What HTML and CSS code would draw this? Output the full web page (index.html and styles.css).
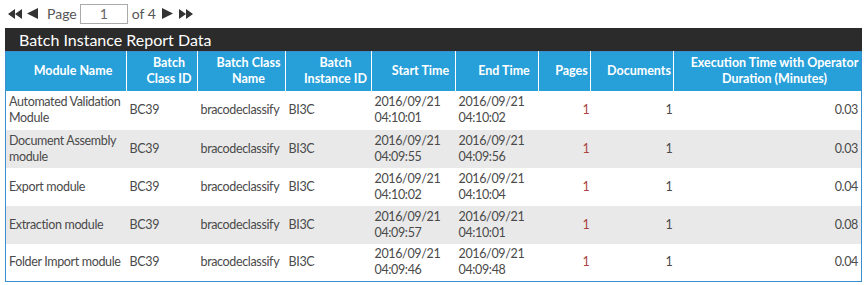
FILE: index.html
```html
<!DOCTYPE html>
<html>
<head>
<meta charset="utf-8">
<link rel="stylesheet" href="styles.css">
</head>
<body>
<div class="wrap">
  <div class="pager">
    <svg class="ico first" width="15" height="10" viewBox="0 0 15 10"><polygon points="0,5 7,0 7,10" /><polygon points="7,5 14,0 14,10" /></svg>
    <svg class="ico prev" width="11" height="11" viewBox="0 0 11 11"><polygon points="0,5.5 11,0 11,11" /></svg>
    <span class="lbl">Page</span>
    <input class="pg" type="text" value="1">
    <span class="lbl">of 4</span>
    <svg class="ico next" width="11" height="11" viewBox="0 0 11 11"><polygon points="11,5.5 0,0 0,11" /></svg>
    <svg class="ico last" width="15" height="10" viewBox="0 0 15 10"><polygon points="15,5 8,0 8,10" /><polygon points="8,5 1,0 1,10" /></svg>
  </div>
  <div class="title">Batch Instance Report Data</div>
  <table class="grid">
    <colgroup>
      <col style="width:121px"><col style="width:71px"><col style="width:88px"><col style="width:86px"><col style="width:84px"><col style="width:83px"><col style="width:52px"><col style="width:83px"><col>
    </colgroup>
    <thead>
      <tr>
        <th>Module Name</th><th>Batch Class ID</th><th>Batch Class Name</th><th>Batch Instance ID</th><th>Start Time</th><th>End Time</th><th>Pages</th><th>Documents</th><th>Execution Time with Operator Duration (Minutes)</th>
      </tr>
    </thead>
    <tbody>
      <tr class="first-row"><td>Automated Validation Module</td><td>BC39</td><td>bracodeclassify</td><td>BI3C</td><td>2016/09/21 04:10:01</td><td>2016/09/21 04:10:02</td><td class="num one red">1</td><td class="num one">1</td><td class="num">0.03</td></tr>
      <tr class="alt"><td>Document Assembly module</td><td>BC39</td><td>bracodeclassify</td><td>BI3C</td><td>2016/09/21 04:09:55</td><td>2016/09/21 04:09:56</td><td class="num one red">1</td><td class="num one">1</td><td class="num">0.03</td></tr>
      <tr><td>Export module</td><td>BC39</td><td>bracodeclassify</td><td>BI3C</td><td>2016/09/21 04:10:02</td><td>2016/09/21 04:10:04</td><td class="num one red">1</td><td class="num one">1</td><td class="num">0.04</td></tr>
      <tr class="alt"><td>Extraction module</td><td>BC39</td><td>bracodeclassify</td><td>BI3C</td><td>2016/09/21 04:09:57</td><td>2016/09/21 04:10:01</td><td class="num one red">1</td><td class="num one">1</td><td class="num">0.08</td></tr>
      <tr><td>Folder Import module</td><td>BC39</td><td>bracodeclassify</td><td>BI3C</td><td>2016/09/21 04:09:46</td><td>2016/09/21 04:09:48</td><td class="num one red">1</td><td class="num one">1</td><td class="num">0.04</td></tr>
    </tbody>
  </table>
</div>
</body>
</html>
```

FILE: styles.css
```css
html, body { margin: 0; padding: 0; background: #fff; }
body { font-family: Lato, "Open Sans", sans-serif; color: #555; }
.wrap { padding-left: 5px; width: 857px; }
.pager { height: 27px; display: flex; align-items: center; padding-left: 3px; box-sizing: border-box; }
.ico { fill: #333; flex: none; }
.first { margin-right: 4px; }
.prev { margin-right: 9px; }
.lbl { font-size: 14px; color: #555; }
.pg { width: 48px; height: 20px; box-sizing: border-box; border: 1px solid #aaa; margin: 0 4px 0 3px; font: 14px Lato, sans-serif; color: #666; text-align: center; padding: 0; }
.next { margin-left: 6px; margin-right: 5px; }
.title { height: 23px; background: #2b2b2b; color: #fff; font-size: 16px; line-height: 23px; padding-left: 14px; margin-top: 1px; }
.grid { border-collapse: collapse; table-layout: fixed; width: 857px; border: 1px solid #3a8fcf; font-size: 12px; }
.grid th { background: #27a0da; color: #fff; font-weight: 700; font-size: 12.5px; height: 39px; padding: 0 1px 0 15px; line-height: 16px; text-align: center; border-left: 1px solid #fff; box-sizing: border-box; }
.grid th:first-child { border-left: none; }
.grid td { height: 38px; padding: 0 3px; line-height: 16px; vertical-align: middle; color: #4a4a4a; box-sizing: border-box; font-size: 12.5px; letter-spacing: -0.35px; }
.grid tr.first-row td { height: 39px; }
.grid tr.alt td { background: #e9e9e9; }
.grid td.num { text-align: right; padding-right: 4px; }
.grid td.one { padding-right: 1px; }
.grid td.red { color: #a94442; }
.grid td:last-child { padding-right: 3px; }
```
